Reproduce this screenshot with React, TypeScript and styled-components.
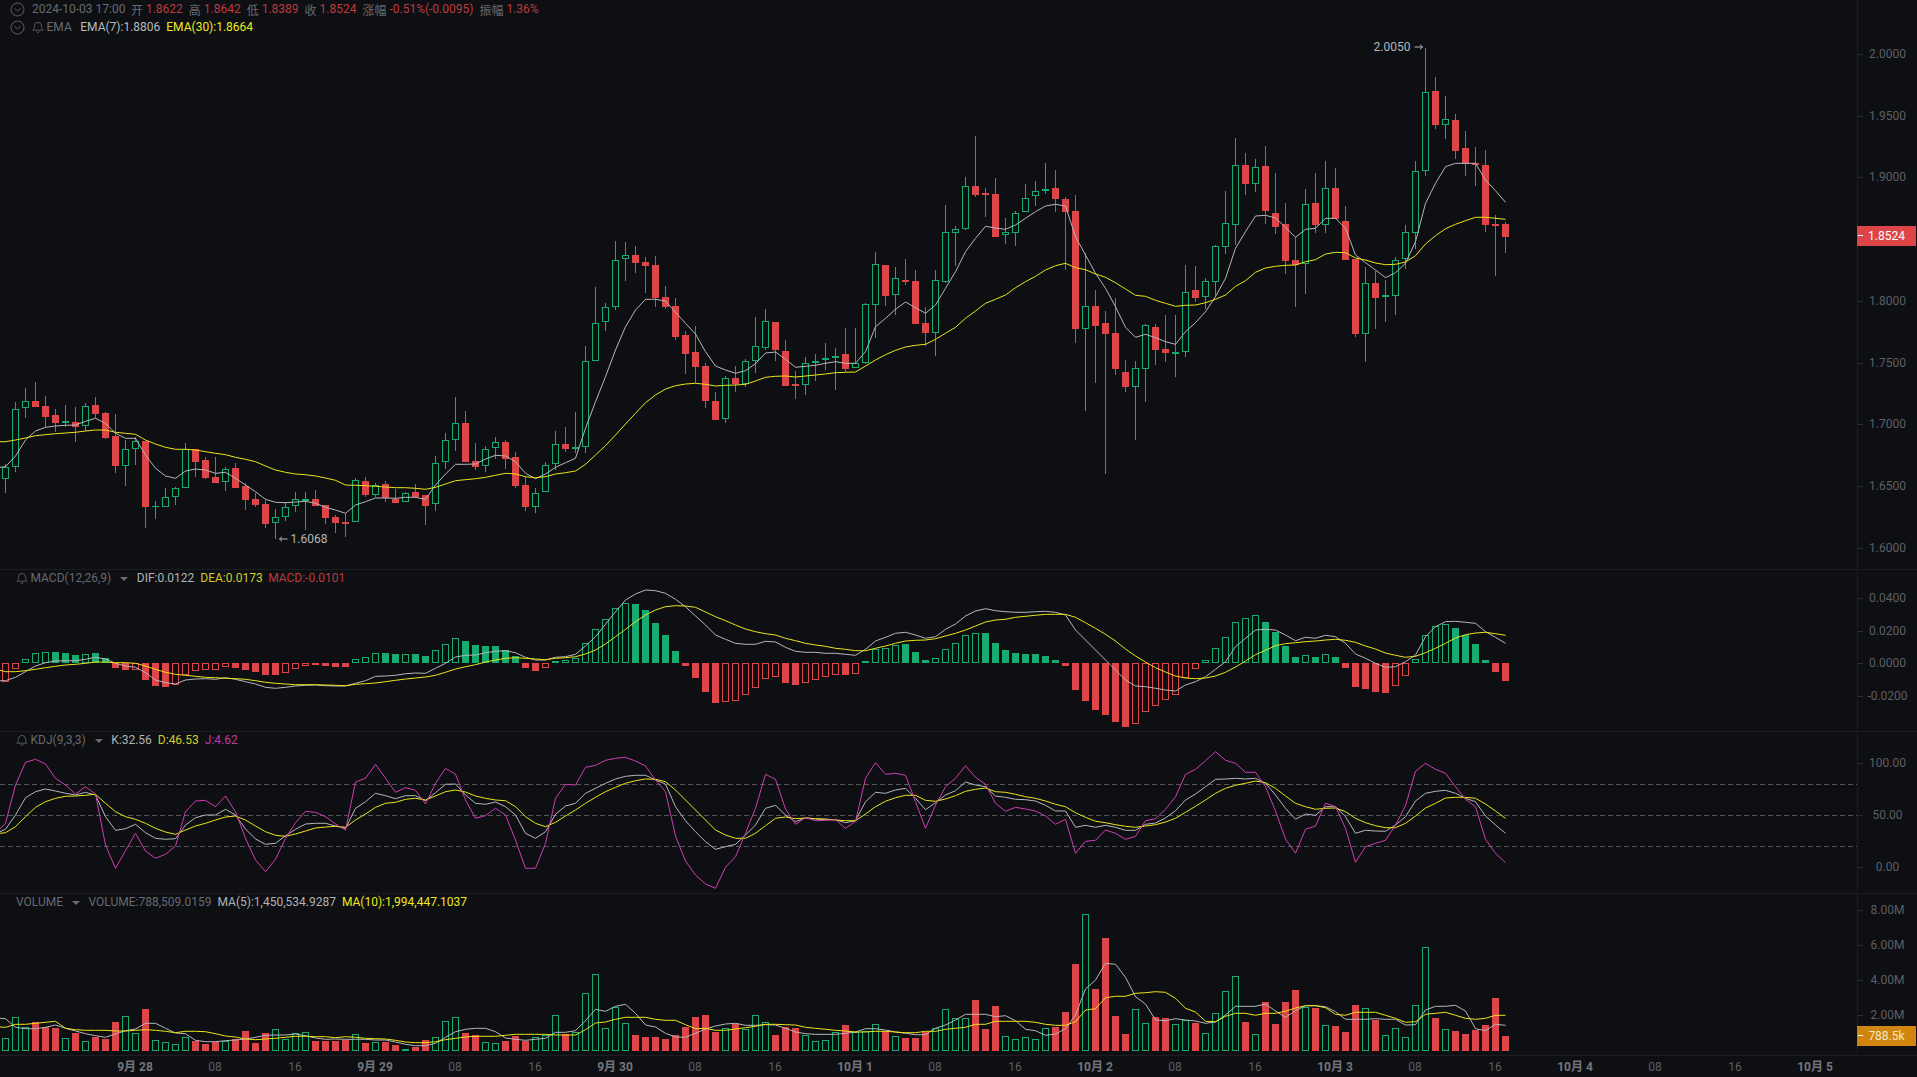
import React from "react";
import styled, { createGlobalStyle } from "styled-components";

const BG = "#0d0f12";
const GREEN = "#18ab70";
const RED = "#de4548";
const LINE_W = "#b6b7ba";
const LINE_Y = "#ece41e";
const LINE_J = "#d03eae";
const BORDER = "#1b1d20";
const MUTED = "#686a72";

const Global = createGlobalStyle`
  html, body { margin: 0; padding: 0; width: 100%; height: 100%; overflow: hidden; background: ${BG}; }
  body { font-family: Roboto, "Noto Sans CJK SC", sans-serif; font-size: 12px; }
`;

const Page = styled.div`
  width: 1917px;
  height: 1077px;
  display: flex;
  flex-direction: column;
  background: ${BG};
  overflow: hidden;
`;
const Pane = styled.section<{ $h: number }>`
  position: relative;
  display: flex;
  height: ${(p) => p.$h}px;
  flex: none;
  box-sizing: border-box;
  border-bottom: 1px solid ${BORDER};
`;
const ChartArea = styled.div`
  position: relative;
  width: 1857px;
  flex: none;
  height: 100%;
`;
const ChartSvg = styled.svg`
  display: block;
  width: 100%;
  height: 100%;
`;
const AxisColumn = styled.div`
  position: relative;
  flex: 1;
  box-sizing: border-box;
  border-left: 1px solid ${BORDER};
  height: 100%;
`;
const AxisLabel = styled.text`
  fill: #5d5f66;
  font-family: Roboto, sans-serif;
  font-size: 12px;
  text-anchor: middle;
  dominant-baseline: central;
`;
const PriceTag = styled.div<{ $top: number; $bg: string; $fg: string }>`
  position: absolute;
  left: -1px;
  right: 1px;
  top: ${(p) => p.$top}px;
  height: 20px;
  background: ${(p) => p.$bg};
  color: ${(p) => p.$fg};
  display: flex;
  align-items: center;
  justify-content: center;
  font-size: 12px;
  line-height: 20px;
  &::before {
    content: "";
    position: absolute;
    left: 1px;
    top: 9px;
    width: 5px;
    height: 1px;
    background: #fff;
  }
`;
const Legend = styled.div`
  position: absolute;
  left: 0;
  top: 0;
  display: flex;
  flex-direction: column;
  font-family: Roboto, "Noto Sans CJK SC", sans-serif;
  font-size: 12px;
  white-space: pre;
`;
const LegendRow = styled.div<{ $h: number; $pad: number }>`
  display: flex;
  align-items: center;
  height: ${(p) => p.$h}px;
  padding-left: ${(p) => p.$pad}px;
`;
const Txt = styled.span<{ $c: string; $ml?: number }>`
  color: ${(p) => p.$c};
  margin-left: ${(p) => p.$ml ?? 0}px;
`;
const Caret = styled.i<{ $ml: number; $mr: number }>`
  display: block;
  flex: none;
  width: 0;
  height: 0;
  margin: 2px ${(p) => p.$mr}px 0 ${(p) => p.$ml}px;
  border-left: 4px solid transparent;
  border-right: 4px solid transparent;
  border-top: 4.5px solid #6a6c72;
`;
const IconBox = styled.svg<{ $ml?: number }>`
  display: block;
  flex: none;
  margin-left: ${(p) => p.$ml ?? 0}px;
`;
const TimeAxis = styled.div`
  height: 22px;
  flex: none;
`;
const TimeSvg = styled.svg`
  display: block;
  width: 100%;
  height: 100%;
`;
const TimeLabel = styled.text<{ $major: boolean }>`
  fill: ${(p) => (p.$major ? "#74767d" : "#5d5f66")};
  font-family: Roboto, "Noto Sans CJK SC", sans-serif;
  font-size: 12px;
  font-weight: ${(p) => (p.$major ? 700 : 400)};
  text-anchor: middle;
  dominant-baseline: central;
`;
const ExtremeLabel = styled.text`
  fill: #b4b6ba;
  font-family: Roboto, sans-serif;
  font-size: 12px;
  dominant-baseline: central;
`;

/* ---------- data, read from the picture ---------- */
type Row = [number, number, number, number, number];
type Candle = { up: boolean; top: number; bot: number; hi: number; lo: number };
const rows = (y0: number, r: Row[]): Candle[] =>
  r.map(([u, t, b, h, l]) => ({ up: !!u, top: y0 + t / 3, bot: y0 + b / 3, hi: y0 + h / 3, lo: y0 + l / 3 }));

const candles: Candle[] = [
  ...rows(370, [
    [1,292,328,282,368],[1,118,292,97,305],[1,94,115,55,143],[0,93,110,37,110],[0,108,140,78,172],
    [0,135,158,118,185],[1,154,158,105,172],[0,156,170,112,215],[1,109,169,100,183],[0,105,131,80,143],
    [0,130,203,127,208],[0,198,287,133,308],[1,238,287,210,347],[1,214,238,200,285],[0,213,410,213,473],
    [1,408,412,393,446],[1,382,412,353,412],[1,355,380,350,405],[1,238,355,218,355],[0,238,275,238,322],
    [0,270,324,260,328],[0,321,338,262,338],[1,298,337,292,364],[0,294,353,278,353],[0,348,389,340,420],
    [0,387,404,370,411],[0,402,461,390,473],[1,442,460,418,508],[1,410,442,395,452],[1,388,409,366,426],
    [1,388,394,367,480],[0,387,407,360,409],[0,405,443,405,462],[0,441,458,435,488],[0,457,461,428,502],
    [1,331,457,323,457],[0,333,375,322,380],[1,344,374,338,380],[0,342,385,332,395],[0,386,398,357,400],
    [1,368,397,365,397],[0,366,381,343,383],[0,375,407,375,464],[1,280,403,258,422],[1,209,277,188,298],
    [1,160,211,80,242],[0,159,275,123,275],[0,274,292,219,301],[1,238,289,228,305],[1,217,235,200,268],
  ]),
  ...rows(220, [
    [0,666,716,660,748],[0,711,798,696,804],[0,795,861,771,873],[1,819,861,804,879],[1,735,816,726,816],
    [1,673,733,632,750],[0,672,687,620,695],[1,680,686,577,700],[1,424,680,378,698],[1,310,424,202,424],
    [1,262,307,250,333],[1,121,262,62,271],[1,106,118,67,183],[0,105,128,78,160],[0,126,137,110,219],
    [0,135,233,107,261],[0,232,261,198,268],[0,258,350,235,360],[0,345,401,333,461],[0,396,440,318,490],
    [0,438,542,428,564],[0,543,599,516,600],[1,475,596,468,608],[0,474,491,438,516],[1,424,491,417,502],
    [1,379,424,292,460],[1,304,383,268,390],[0,306,389,306,422],[0,393,497,361,497],[0,492,497,452,537],
    [1,430,496,412,524],[1,424,430,403,482],[1,415,421,369,450],[1,409,415,385,510],[0,402,446,325,456],
    [1,429,445,324,445],[1,253,428,248,432],[1,133,256,96,353],[0,135,227,135,258],[1,175,226,142,285],
    [0,181,186,116,194],[0,183,311,151,311],[0,309,339,260,378],[1,181,340,151,407],
  ]),
  ...rows(130, [
    [1,307,455,225,460],[1,296,310,288,407],[1,169,298,142,300],[0,168,194,18,200],[0,190,194,173,260],[0,193,320,145,320],
  ]),
  ...rows(120, [
    [1,337,346,295,372],[1,280,340,273,378],[1,233,277,192,277],[1,214,229,183,258],[1,208,214,128,222],
    [0,205,236,150,275],[0,238,275,230,450],[0,274,627,225,668],[1,559,626,400,873],[0,559,617,511,790],
    [0,610,641,574,1062],[0,640,746,533,765],[0,757,800,721,817],[1,745,800,722,960],[1,616,748,612,845],
    [0,621,689,612,735],[0,687,698,585,727],[1,697,701,585,770],[1,517,697,435,712],[0,511,533,437,545],
    [1,484,532,475,568],[1,379,487,376,530],[1,310,382,213,402],[1,136,316,54,376],[0,135,191,98,225],
    [1,142,193,118,215],[0,138,272,78,312],[0,280,320,160,341],[0,312,422,250,463],[0,420,436,350,560],
    [1,253,433,208,523],[0,250,315,160,340],[1,205,316,122,340],[0,205,296,145,296],[0,304,419,258,421],
    [0,417,641,417,652],[1,490,643,440,727],[0,489,533,452,626],[1,526,532,480,605],[1,419,529,412,584],
    [1,337,418,315,448],[1,154,340,123,387],
  ]),
  ...rows(20, [
    [1,217,454,85,468],[0,213,315,171,327],[1,298,314,229,356],[0,300,392,283,416],[0,384,432,332,468],
    [0,430,434,380,498],[0,435,614,390,635],[0,613,617,585,768],[0,612,650,605,698],
  ]),
];

const cx = (k: number) => 5.5 + 10 * k;
/* `lead` is the line's height at the left edge of the chart: the series runs on off-screen. */
const pts = (lead: number, parts: [number, number[]][]) => {
  const out: string[] = [];
  parts.forEach(([y0, arr]) => arr.forEach((v) => out.push(`${cx(out.length)},${(y0 + v / 3).toFixed(1)}`)));
  return `0,${lead.toFixed(1)} ` + out.join(" ");
};

const ema7 = pts(370 + 292 / 3, [
  [370, [290,258,210,183,172,168,166,165,154,145,160,190,205,205,255,295,318,325,303,297,300,310,307,325,345,365,388,397,398,396,394,400,412,420,430,405,395,384,384,385,382,382,388,345,312,283,283,282,267,256]],
  [220, [708,725,760,776,762,742,728,715,625,545,470,390,320,270,238,238,243,277,310,342,395,438,450,460,452,431,399,396,418,442,439,436,430,425,430,430,395,320,295,268,246,263,280,255,205,155,95,55,19,24]],
  [120, [328,315,295,275,258,253,258,350,405,460,505,560,622,652,643,653,665,673,635,608,575,530,475,385,335,288,286,294,322,352,328,325,295,295,325,405,428,450,473,458,430,365,250,190,140,130,130,130,180,212,247]],
]);
const ema30 = pts(370 + 215 / 3, [
  [370, [215,210,204,197,194,191,189,187,183,180,180,187,190,193,210,222,232,238,238,240,245,250,254,262,268,275,288,300,307,312,314,318,324,331,345,346,347,349,351,353,353,355,358,352,342,332,329,326,322,316]],
  [220, [760,762,770,773,770,762,758,753,733,705,677,645,612,580,548,525,507,497,492,490,493,498,496,495,493,483,472,469,468,471,468,465,462,458,457,456,438,420,404,391,381,376,373,358,340,322,295,273,250,238]],
  [120, [525,503,485,469,450,437,430,443,449,462,472,488,507,526,529,541,550,559,556,555,548,538,525,499,482,457,444,439,436,435,425,419,402,397,398,414,420,429,434,433,426,407,372,347,326,313,302,292,292,295,298]],
]);

const macdVals = [
  -57,-18,13,30,34,32,29,23,28,29,15,-15,-22,-20,-52,-70,-73,-65,-36,-24,-20,-20,-11,-15,-22,-28,-37,-37,-30,-18,-9,-6,-10,-12,-13,13,19,31,29,26,28,26,20,38,58,76,65,53,50,50,
  38,20,-15,-24,-14,5,9,15,61,103,133,166,181,176,158,119,83,35,-9,-45,-87,-120,-116,-113,-95,-74,-47,-43,-60,-66,-59,-50,-41,-35,-36,-32,5,42,46,54,56,32,8,16,43,61,85,90,89,59,
  38,29,26,26,20,8,-9,-81,-114,-141,-156,-177,-192,-182,-146,-128,-110,-95,-45,-17,10,45,78,124,135,145,122,92,50,17,25,17,28,17,-15,-72,-79,-87,-91,-68,-38,13,85,110,118,104,83,56,8,-27,-54,
];
const macdStyle =
  "hhhhhfffhf" + "fffhfffhhh" + "hhhfffffhh" + "hffffhhhff" + "hffhhhffff" +
  "ffffhfhhhh" + "hhhfffffff" + "ffhhhhhhff" + "hhhhfhfhhh" + "fffhhhhhff" +
  "ffffffffff" + "fffhhhhhhh" + "hhhhhhffff" + "hfhffffffh" + "hhhhhfffff" + "f";
const dif = pts(560 + 362 / 3, [
  [560, [362,352,335,318,308,303,302,302,298,292,297,310,318,322,338,360,368,372,360,357,356,358,353,358,365,372,382,385,382,378,376,375,377,378,378,370,362,349,348,346,341,339,340,325,310,291,286,285,278,274]],
  [580, [212,218,232,240,240,232,230,223,198,170,133,95,60,42,30,32,40,58,80,108,135,165,178,190,193,193,184,186,202,214,217,217,220,220,223,226,208,183,172,160,157,165,175,170,148,132,108,93,86,92]],
  [580, [95,97,97,95,94,97,105,150,180,210,240,270,300,318,320,325,330,333,315,305,290,268,245,200,175,150,148,150,165,182,172,175,166,170,190,222,235,250,262,260,245,225,170,140,125,124,127,130,155,172,190]],
]);
const dea = pts(560 + 331 / 3, [
  [560, [335,335,332,328,323,319,315,313,310,306,306,308,308,310,318,328,337,343,346,349,352,353,355,356,358,362,367,370,372,374,374,374,375,376,377,373,371,369,365,361,357,354,351,346,337,327,320,314,306,300]],
  [580, [235,233,235,237,239,235,233,230,222,210,192,170,148,125,105,90,80,77,78,82,96,110,122,135,147,155,161,165,175,182,190,195,199,205,208,212,212,205,198,190,183,181,180,176,168,160,150,138,126,120]],
  [580, [118,112,109,106,103,103,103,112,128,145,163,183,207,228,246,263,276,288,294,296,294,288,277,261,243,224,211,197,191,188,185,183,180,178,181,187,198,207,219,226,232,229,218,205,190,174,164,159,157,161,166]],
]);

const kdjK = pts(720 + 335 / 3, [
  [720, [328,285,233,215,207,213,220,225,217,225,290,331,326,313,338,355,358,356,315,293,285,285,268,285,327,357,373,370,347,328,312,310,310,318,325,265,245,220,227,236,227,227,242,218,193,192,225,250,253,246]],
  [580, [680,705,760,775,755,703,678,670,640,625,610,597,589,586,586,600,612,680,722,755,785,808,800,793,765,735,685,676,705,725,713,717,719,719,728,722,665,637,640,630,625,655,689,668,645,632,606,615,620,648]],
  [580, [652,658,659,663,676,693,693,742,736,742,736,742,751,751,733,729,714,692,660,642,620,598,597,595,597,595,610,645,685,718,702,706,680,680,710,760,751,753,754,735,710,663,640,634,631,640,655,665,708,735,760]],
]);
const kdjD = pts(720 + 340 / 3, [
  [720, [338,320,290,262,245,235,229,228,226,223,250,275,290,298,310,325,336,343,330,318,310,300,291,288,300,318,335,346,349,342,333,324,321,319,322,300,282,262,250,247,238,235,240,228,215,210,216,228,235,240]],
  [580, [662,680,710,730,740,727,708,690,670,652,635,622,610,602,597,598,605,630,660,690,720,750,765,775,775,760,737,715,711,716,714,716,717,720,722,722,702,680,664,653,646,646,661,664,657,647,634,628,624,635]],
  [580, [637,643,650,655,663,673,680,698,712,724,728,734,739,742,738,734,726,715,697,679,660,640,625,616,610,603,608,625,648,670,680,688,685,684,695,715,728,737,743,743,730,708,684,670,654,652,652,655,672,693,715]],
]);
const kdjJ = pts(720 + 326 / 3, [
  [720, [310,195,127,118,132,175,195,222,200,222,375,445,392,340,393,415,403,378,275,243,241,260,228,275,355,420,455,418,355,308,274,277,290,312,330,186,175,133,175,217,203,211,252,190,145,163,240,295,287,265]],
  [580, [705,780,865,865,790,655,613,615,562,556,541,535,532,543,558,600,635,768,843,885,912,925,862,830,760,685,583,598,687,733,713,722,721,719,745,724,595,548,583,580,586,665,745,675,620,595,557,592,613,670]],
  [580, [694,682,687,693,708,733,718,820,784,781,750,760,778,769,722,716,688,650,583,568,542,515,541,550,577,577,620,693,777,820,748,738,670,680,745,847,800,790,781,735,677,574,550,568,580,620,658,680,778,820,848]],
]);

const volVals = [
  40,103,73,-86,-72,-68,40,-53,31,-41,-35,-86,106,55,-125,34,28,22,42,-30,-20,-27,30,-35,-59,-24,-53,67,35,55,58,-29,-29,-29,-34,52,-24,28,-27,-18,7,-11,-32,43,91,103,-53,-47,27,25,
  -29,-44,-29,43,49,109,-50,58,175,232,70,132,85,-47,-41,-41,-35,-47,-71,-101,-107,-57,70,-82,67,109,88,-47,-71,-68,49,31,34,57,-77,56,61,82,-59,46,-38,-38,-58,70,127,100,100,-154,-65,-134,
  46,37,43,37,70,-71,-116,-260,412,-185,-338,-104,-50,127,85,-101,-98,82,92,-83,55,115,181,226,-86,52,-146,-80,-146,-182,132,-128,79,-74,-56,-137,130,-94,49,70,43,139,313,-98,67,-59,-50,-62,-77,-158,-44,
];
const volMa5 = pts(720 + 895 / 3, [
  [720, [896,922,926,926,922,915,925,933,941,947,952,942,932,927,910,910,925,939,941,961,965,965,962,960,957,952,946,945,945,942,947,954,958,957,958,958,958,960,960,966,973,977,977,970,952,935,928,925,925,935]],
  [580, [1374,1378,1381,1378,1375,1357,1357,1352,1322,1288,1294,1279,1273,1300,1335,1341,1360,1371,1372,1360,1347,1338,1332,1330,1336,1336,1334,1335,1345,1356,1361,1363,1363,1363,1360,1356,1346,1346,1350,1356,1360,1364,1364,1345,1335,1320,1303,1303,1303,1310]],
  [580, [1307,1322,1348,1352,1366,1362,1346,1305,1227,1200,1150,1153,1192,1250,1272,1320,1322,1316,1320,1323,1330,1326,1305,1279,1279,1279,1272,1293,1312,1292,1277,1277,1280,1295,1318,1318,1318,1316,1318,1318,1335,1334,1290,1279,1279,1276,1293,1346,1352,1333,1336]],
]);
const volMa10 = pts(720 + 921 / 3, [
  [720, [922,913,913,910,907,904,925,929,931,931,931,933,933,931,929,931,934,938,934,934,935,941,948,951,957,959,957,955,952,949,949,950,950,953,950,952,955,956,957,961,966,968,968,965,959,955,951,949,949,949]],
  [580, [1366,1363,1363,1363,1363,1365,1365,1365,1349,1329,1326,1318,1312,1312,1312,1318,1321,1321,1334,1346,1345,1351,1351,1347,1343,1339,1333,1333,1334,1335,1342,1345,1348,1351,1353,1356,1356,1354,1354,1356,1358,1358,1354,1354,1348,1345,1342,1333,1333,1324]],
  [580, [1324,1324,1324,1327,1333,1336,1336,1325,1290,1286,1253,1249,1249,1240,1238,1235,1237,1255,1285,1296,1324,1325,1309,1300,1300,1306,1300,1300,1294,1284,1277,1277,1283,1303,1306,1297,1297,1297,1306,1315,1327,1325,1303,1300,1297,1306,1315,1318,1315,1306,1306]],
]);

const timeLabels: [string, boolean][] = [
  ["9月 28", true],["08", false],["16", false],["9月 29", true],["08", false],["16", false],
  ["9月 30", true],["08", false],["16", false],["10月 1", true],["08", false],["16", false],
  ["10月 2", true],["08", false],["16", false],["10月 3", true],["08", false],["16", false],
  ["10月 4", true],["08", false],["16", false],["10月 5", true],
];

/* ---------- drawing parts ---------- */
const CircleChevron = () => (
  <IconBox width="15" height="15" viewBox="0 0 15 15" fill="none" stroke="#5b5d62" strokeWidth="1">
    <circle cx="7.5" cy="7.5" r="6.5" />
    <path d="M4.5 6.3 L7.5 9.1 L10.5 6.3" />
  </IconBox>
);
const Bell = ({ ml }: { ml?: number }) => (
  <IconBox $ml={ml} width="12" height="12" viewBox="0 0 12 12" fill="none" stroke="#5d5f66" strokeWidth="0.9">
    <path d="M.8 9.2 C2.2 8.4 2.4 7.2 2.4 5 A3.6 3.6 0 0 1 9.6 5 C9.6 7.2 9.8 8.4 11.2 9.2 Z" />
    <path d="M4.5 10.4 A1.6 1.6 0 0 0 7.5 10.4" />
  </IconBox>
);

const Candles = () => (
  <g shapeRendering="crispEdges">
    {candles.map((c, k) => {
      const col = c.up ? GREEN : RED;
      const top = Math.round(c.top);
      const bot = Math.max(Math.round(c.bot), top + 1);
      const x = 2 + 10 * k;
      return (
        <g key={k}>
          <line x1={x + 3.5} x2={x + 3.5} y1={c.hi} y2={top} stroke={col} />
          <line x1={x + 3.5} x2={x + 3.5} y1={bot} y2={c.lo} stroke={col} />
          {c.up ? (
            bot - top < 3 ? (
              <rect x={x} y={top} width={7} height={bot - top} fill={col} />
            ) : (
              <rect x={x + 0.5} y={top + 0.5} width={6} height={bot - top - 1} fill="none" stroke={col} />
            )
          ) : (
            <rect x={x} y={top} width={7} height={bot - top} fill={col} />
          )}
        </g>
      );
    })}
  </g>
);
const Bar = ({ k, top, bot, col, hollow }: { k: number; top: number; bot: number; col: string; hollow: boolean }) => {
  const x = 2 + 10 * k;
  const h = Math.max(bot - top, 1);
  return hollow && h >= 3 ? (
    <rect x={x + 0.5} y={top + 0.5} width={6} height={h - 1} fill="none" stroke={col} />
  ) : (
    <rect x={x} y={top} width={7} height={h} fill={col} />
  );
};
const Poly = ({ p, c }: { p: string; c: string }) => <polyline points={p} fill="none" stroke={c} strokeWidth={1} />;

const Axis = ({ top, h, ticks }: { top: number; h: number; ticks: [string, number][] }) => (
  <ChartSvg viewBox={`1858 ${top} 59 ${h}`}>
    {ticks.map(([t, y]) => (
      <g key={t}>
        <line x1={1858} x2={1863} y1={Math.round(y) + 0.5} y2={Math.round(y) + 0.5} stroke="#2c2e32" />
        <AxisLabel x={1887.5} y={y}>{t}</AxisLabel>
      </g>
    ))}
  </ChartSvg>
);

const priceTicks: [string, number][] = ["2.0000","1.9500","1.9000","1.8000","1.7500","1.7000","1.6500","1.6000"]
  .map((t) => [t, 54 + ((2 - parseFloat(t)) / 0.05) * 61.7]);

export default function App() {
  return (
    <Page>
      <Global />
      <Pane $h={570}>
        <ChartArea>
          <ChartSvg viewBox="0 0 1857 569">
            <Candles />
            <Poly p={ema7} c={LINE_W} />
            <Poly p={ema30} c={LINE_Y} />
            <ExtremeLabel x={1373.5} y={46.5}>2.0050</ExtremeLabel>
            <path d="M1414.5 47 H1422.5 M1420 44.8 L1422.5 47 L1420 49.2" fill="none" stroke="#b4b6ba" />
            <path d="M279.5 539 H287.5 M282 536.8 L279.5 539 L282 541.2" fill="none" stroke="#b4b6ba" />
            <ExtremeLabel x={290.5} y={538.5}>1.6068</ExtremeLabel>
          </ChartSvg>
          <Legend>
            <LegendRow $h={18} $pad={10}>
              <CircleChevron />
              <Txt $c={MUTED} $ml={7}>2024-10-03 17:00</Txt>
              <Txt $c={MUTED} $ml={5.5}>开 </Txt><Txt $c="#bd3b3f">1.8622</Txt>
              <Txt $c={MUTED} $ml={6}>高 </Txt><Txt $c="#bd3b3f">1.8642</Txt>
              <Txt $c={MUTED} $ml={6}>低 </Txt><Txt $c="#bd3b3f">1.8389</Txt>
              <Txt $c={MUTED} $ml={6}>收 </Txt><Txt $c="#bd3b3f">1.8524</Txt>
              <Txt $c={MUTED} $ml={6}>涨幅 </Txt><Txt $c="#bd3b3f">-0.51%(-0.0095)</Txt>
              <Txt $c={MUTED} $ml={6}>振幅 </Txt><Txt $c="#bd3b3f">1.36%</Txt>
            </LegendRow>
            <LegendRow $h={18} $pad={10}>
              <CircleChevron />
              <Bell ml={7} />
              <Txt $c={MUTED} $ml={2.5}>EMA</Txt>
              <Txt $c="#b8babe" $ml={8.5}>EMA(7):1.8806</Txt>
              <Txt $c="#f0e81e" $ml={6}>EMA(30):1.8664</Txt>
            </LegendRow>
          </Legend>
        </ChartArea>
        <AxisColumn>
          <Axis top={0} h={569} ticks={priceTicks} />
          <PriceTag $top={226} $bg={RED} $fg="#ffffff">1.8524</PriceTag>
        </AxisColumn>
      </Pane>

      <Pane $h={162}>
        <ChartArea>
          <ChartSvg viewBox="0 570 1857 161">
            <g shapeRendering="crispEdges">
              {macdVals.map((v, k) => (
                <Bar
                  key={k}
                  k={k}
                  top={v > 0 ? Math.round(663 - v / 3) : 663}
                  bot={v > 0 ? 663 : Math.round(663 - v / 3)}
                  col={v > 0 ? GREEN : RED}
                  hollow={macdStyle[k] === "h"}
                />
              ))}
            </g>
            <Poly p={dif} c={LINE_W} />
            <Poly p={dea} c={LINE_Y} />
          </ChartSvg>
          <Legend>
            <LegendRow $h={16} $pad={16}>
              <Bell />
              <Txt $c={MUTED} $ml={2.5}>MACD(12,26,9)</Txt>
              <Caret $ml={9} $mr={8.5} />
              <Txt $c="#b0b2b6">DIF:0.0122</Txt>
              <Txt $c="#d2cb28" $ml={6}>DEA:0.0173</Txt>
              <Txt $c="#bd3b3f" $ml={5.5}>MACD:-0.0101</Txt>
            </LegendRow>
          </Legend>
        </ChartArea>
        <AxisColumn>
          <Axis top={570} h={161} ticks={[["0.0400",598],["0.0200",631],["0.0000",663],["-0.0200",696]]} />
        </AxisColumn>
      </Pane>

      <Pane $h={162}>
        <ChartArea>
          <ChartSvg viewBox="0 732 1857 161">
            <g stroke="#55575b" strokeDasharray="5 3" shapeRendering="crispEdges">
              <line x1={0} x2={1857} y1={784.5} y2={784.5} />
              <line x1={0} x2={1857} y1={815.5} y2={815.5} />
              <line x1={0} x2={1857} y1={846.5} y2={846.5} />
            </g>
            <Poly p={kdjK} c={LINE_W} />
            <Poly p={kdjD} c={LINE_Y} />
            <Poly p={kdjJ} c={LINE_J} />
          </ChartSvg>
          <Legend>
            <LegendRow $h={16} $pad={16}>
              <Bell />
              <Txt $c={MUTED} $ml={2.5}>KDJ(9,3,3)</Txt>
              <Caret $ml={9} $mr={8.5} />
              <Txt $c="#b0b2b6">K:32.56</Txt>
              <Txt $c="#d2cb28" $ml={6}>D:46.53</Txt>
              <Txt $c="#c23aa3" $ml={6}>J:4.62</Txt>
            </LegendRow>
          </Legend>
        </ChartArea>
        <AxisColumn>
          <Axis top={732} h={161} ticks={[["100.00",763],["50.00",815.3],["0.00",867]]} />
        </AxisColumn>
      </Pane>

      <Pane $h={162}>
        <ChartArea>
          <ChartSvg viewBox="0 894 1857 161">
            <g shapeRendering="crispEdges">
              {volVals.map((v, k) => (
                <Bar
                  key={k}
                  k={k}
                  top={Math.round(1051 - Math.abs(v) / 3)}
                  bot={1051}
                  col={v > 0 ? GREEN : RED}
                  hollow={v > 0}
                />
              ))}
            </g>
            <Poly p={volMa5} c={LINE_W} />
            <Poly p={volMa10} c={LINE_Y} />
          </ChartSvg>
          <Legend>
            <LegendRow $h={16} $pad={16}>
              <Txt $c={MUTED}>VOLUME</Txt>
              <Caret $ml={9} $mr={8.5} />
              <Txt $c={MUTED}>VOLUME:788,509.0159</Txt>
              <Txt $c="#b0b2b6" $ml={6}>MA(5):1,450,534.9287</Txt>
              <Txt $c="#f0e81e" $ml={6}>MA(10):1,994,447.1037</Txt>
            </LegendRow>
          </Legend>
        </ChartArea>
        <AxisColumn>
          <Axis top={894} h={161} ticks={[["8.00M",910],["6.00M",945],["4.00M",980],["2.00M",1015]]} />
          <PriceTag $top={132} $bg="#d0860c" $fg="#f6e7c8">788.5k</PriceTag>
        </AxisColumn>
      </Pane>

      <TimeAxis>
        <TimeSvg viewBox="0 1056 1917 21">
          {timeLabels.map(([t, major], i) => (
            <TimeLabel key={i} $major={major} x={135 + 80 * i} y={1066}>{t}</TimeLabel>
          ))}
        </TimeSvg>
      </TimeAxis>
    </Page>
  );
}
